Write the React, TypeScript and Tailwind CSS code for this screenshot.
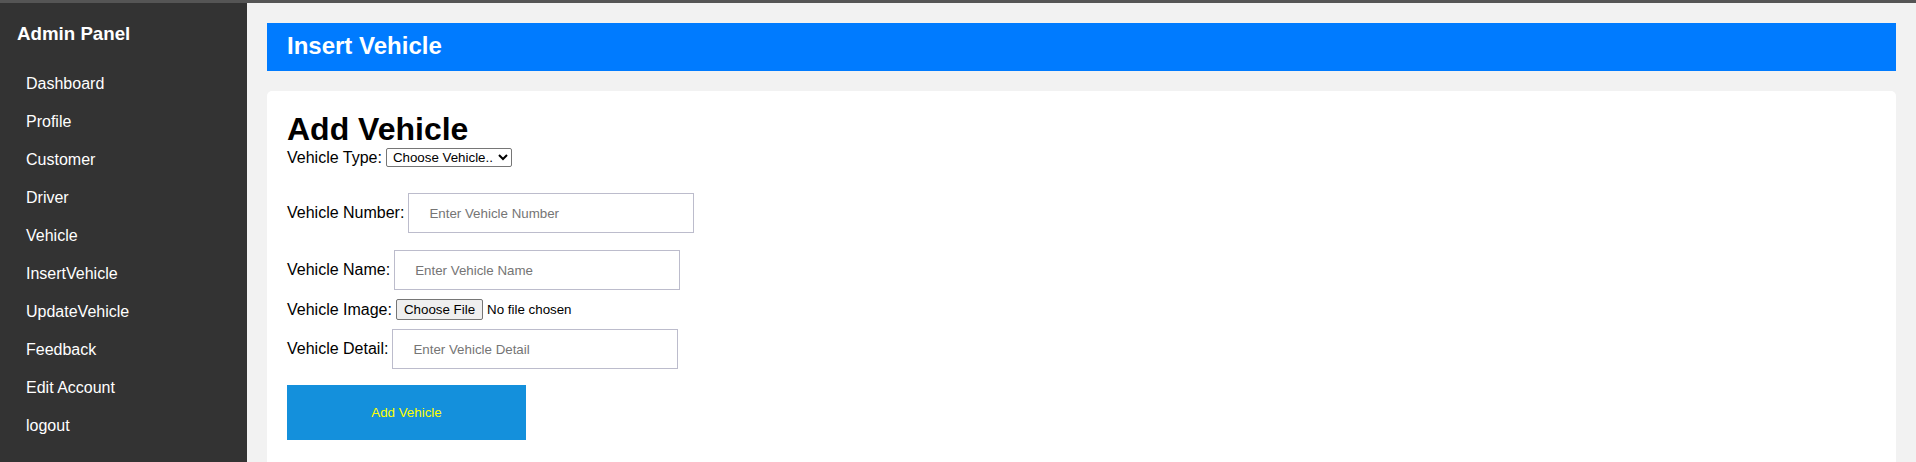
import { useState } from "react";

const menu = [
  "Dashboard",
  "Profile",
  "Customer",
  "Driver",
  "Vehicle",
  "InsertVehicle",
  "UpdateVehicle",
  "Feedback",
  "Edit Account",
  "logout",
];

export default function App() {
  const [vehicle, setVehicle] = useState<Record<string, string>>({});

  return (
    <div className="flex flex-col h-screen overflow-hidden font-['Liberation_Sans',Arial,sans-serif] leading-[normal] text-black">
      <div className="h-[3px] bg-[#555555] shrink-0" />
      <div className="flex flex-1 min-h-0">
        {/* sidebar */}
        <div className="w-[247px] shrink-0 bg-[#333333] pt-[20px] text-white">
          <h3 className="pl-[17px] text-[18.72px] font-bold mb-[20px]">Admin Panel</h3>
          <ul>
            {menu.map((m) => (
              <li key={m}>
                <a href="#" className="block pl-[26px] py-[10px] text-[16px] text-white">
                  {m}
                </a>
              </li>
            ))}
          </ul>
        </div>

        {/* main */}
        <div className="flex-1 bg-[#f2f2f2] px-[20px] pt-[20px] min-w-0">
          <div className="bg-[#007bff] px-[20px] h-[48px] pt-[9px]">
            <h2 className="text-white text-[24px] font-bold">Insert Vehicle</h2>
          </div>

          <div className="mt-[20px] bg-white rounded-[5px] px-[20px] pt-[20px] pb-[40px]">
            <h1 className="text-[32px] font-bold">Add Vehicle</h1>

            <div className="flex items-center h-[19px] text-[16px]">
              <span>Vehicle Type:</span>
              <select
                className="ml-[4px] h-[19px] pl-[2px] pr-[1px] border border-[#767676] rounded-[2px] text-[13.33px] bg-white"
                value={vehicle.type ?? ""}
                onChange={(e) => setVehicle({ ...vehicle, type: e.target.value })}
              >
                <option value="">Choose Vehicle..</option>
                <option value="car">Car</option>
                <option value="bike">Bike</option>
              </select>
            </div>

            <div className="flex items-center mt-[26px] text-[16px]">
              <span>Vehicle Number:</span>
              <input
                type="text"
                placeholder="Enter Vehicle Number"
                className="ml-[4px] w-[286px] h-[40px] border border-[#bcbccc] pl-[20px] text-[13.33px] placeholder:text-[#757575]"
                value={vehicle.number ?? ""}
                onChange={(e) => setVehicle({ ...vehicle, number: e.target.value })}
              />
            </div>

            <div className="flex items-center mt-[17px] text-[16px]">
              <span>Vehicle Name:</span>
              <input
                type="text"
                placeholder="Enter Vehicle Name"
                className="ml-[4px] w-[286px] h-[40px] border border-[#bcbccc] pl-[20px] text-[13.33px] placeholder:text-[#757575]"
                value={vehicle.name ?? ""}
                onChange={(e) => setVehicle({ ...vehicle, name: e.target.value })}
              />
            </div>

            <div className="flex items-center mt-[9px] h-[21px] text-[16px]">
              <span>Vehicle Image:</span>
              <input
                type="file"
                className="ml-[4px] text-[13.33px] file:h-[21px] file:border file:border-[#767676] file:bg-[#efefef] file:rounded-[2px] file:px-[7px] file:mr-[4px] file:text-black"
              />
            </div>

            <div className="flex items-center mt-[9px] text-[16px]">
              <span>Vehicle Detail:</span>
              <input
                type="text"
                placeholder="Enter Vehicle Detail"
                className="ml-[4px] w-[286px] h-[40px] border border-[#bcbccc] pl-[20px] text-[13.33px] placeholder:text-[#757575]"
                value={vehicle.detail ?? ""}
                onChange={(e) => setVehicle({ ...vehicle, detail: e.target.value })}
              />
            </div>

            <button className="mt-[16px] w-[239px] h-[55px] bg-[#1490dc] text-[#ffff00] text-[13.33px]">
              Add Vehicle
            </button>
          </div>
        </div>
      </div>
    </div>
  );
}
